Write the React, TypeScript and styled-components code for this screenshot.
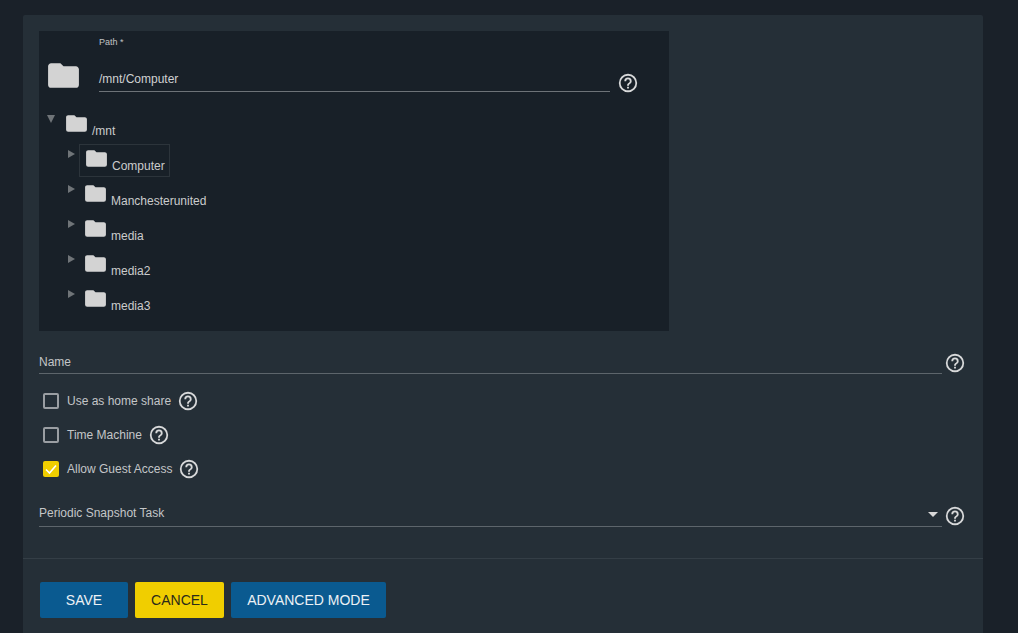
import React from "react";
import styled, { createGlobalStyle } from "styled-components";

const GlobalStyle = createGlobalStyle`
  html, body {
    margin: 0;
    height: 100%;
    overflow: hidden;
    background: #1a2129;
    font-family: "Liberation Sans", Arial, sans-serif;
  }
`;

const Page = styled.div`
  padding: 15px 35px 0 23px;
  height: 618px;
`;

const Card = styled.div`
  width: 960px;
  height: 618px;
  box-sizing: border-box;
  padding-top: 16px;
  background: #252f37;
  border-radius: 2px 2px 0 0;
`;

const Body = styled.div`
  padding: 0 17px 0 16px;
`;

const TreePanel = styled.div`
  width: 630px;
  height: 300px;
  box-sizing: border-box;
  padding: 6px 0 0 9px;
  background: #182028;
`;

const PathRow = styled.div`
  display: flex;
  align-items: flex-start;
  height: 78px;
`;

const BigFolder = styled.div`
  width: 37px;
  height: 37px;
  margin: 20px 17px 0 -3px;
`;

const PathField = styled.div`
  width: 511px;
  height: 55px;
  box-sizing: border-box;
  border-bottom: 1px solid #6d7378;
`;

const PathLabel = styled.div`
  font-size: 9px;
  line-height: 10px;
  color: #c0c2c4;
`;

const PathValue = styled.div`
  margin-top: 25px;
  font-size: 12px;
  line-height: 14px;
  color: #d0d1d2;
`;

const PathHelp = styled.div`
  margin: 35px 0 0 7px;
`;

const TreeRow = styled.div<{ $depth: number }>`
  display: flex;
  align-items: flex-start;
  height: 35px;
  padding-left: ${(p) => p.$depth * 20}px;
`;

const Toggle = styled.div<{ $open?: boolean }>`
  flex: none;
  width: 0;
  height: 0;
  ${(p) =>
    p.$open
      ? `
    margin-left: -1px;
    margin-right: 5px;
    border-left: 4px solid transparent;
    border-right: 4px solid transparent;
    border-top: 8px solid #6f7478;
  `
      : `
    margin-right: 4px;
    border-top: 4px solid transparent;
    border-bottom: 4px solid transparent;
    border-left: 7px solid #6f7478;
  `}
`;

const NodeBox = styled.div<{ $active?: boolean }>`
  display: flex;
  align-items: flex-start;
  height: 33px;
  box-sizing: border-box;
  margin-top: -6px;
  padding: 1px 4px 0 ${(p) => (p.$active ? 4 : 3)}px;
  border: 1px solid ${(p) => (p.$active ? "#2c343b" : "transparent")};
`;

const NodeIcon = styled.div`
  width: 25px;
  height: 25px;
  margin-right: 3px;
`;

const NodeName = styled.span`
  margin-top: 13px;
  font-size: 12px;
  line-height: 14px;
  color: #cbcccd;
`;

const FieldRow = styled.div<{ $top: number }>`
  display: flex;
  align-items: flex-start;
  margin-top: ${(p) => p.$top}px;
`;

const Field = styled.div<{ $pad: number }>`
  position: relative;
  flex: none;
  width: 903px;
  height: 27px;
  box-sizing: border-box;
  padding-top: ${(p) => p.$pad}px;
  border-bottom: 1px solid #5d656b;
  font-size: 12px;
  line-height: 14px;
  color: #c4c6c8;
`;

const Caret = styled.div`
  position: absolute;
  right: 4px;
  top: 12px;
  width: 0;
  height: 0;
  border-left: 5px solid transparent;
  border-right: 5px solid transparent;
  border-top: 5px solid #d8d8d8;
`;

const FieldHelp = styled.div`
  margin: 5px 0 0 2px;
`;

const CheckList = styled.div`
  display: flex;
  flex-direction: column;
  gap: 16px;
  margin-top: 18px;
  padding-left: 4px;
`;

const CheckRow = styled.div`
  display: flex;
  align-items: center;
  height: 18px;
`;

const Box = styled.div<{ $checked?: boolean }>`
  display: flex;
  align-items: center;
  justify-content: center;
  width: 16px;
  height: 16px;
  box-sizing: border-box;
  margin-right: 8px;
  border-radius: 2px;
  border: ${(p) => (p.$checked ? "none" : "2px solid #9a9ea2")};
  background: ${(p) => (p.$checked ? "#f0ce00" : "transparent")};
`;

const CheckLabel = styled.span`
  font-size: 12px;
  line-height: 14px;
  color: #c4c6c8;
`;

const CheckHelp = styled.div`
  display: flex;
  margin-left: 6px;
`;

const Divider = styled.div`
  margin-top: 31px;
  border-top: 1px solid #343e46;
`;

const Actions = styled.div`
  display: flex;
  gap: 7px;
  padding: 23px 0 0 17px;
`;

const ActionButton = styled.button<{ $accent?: boolean; $width: number }>`
  width: ${(p) => p.$width}px;
  height: 36px;
  padding: 0;
  border: none;
  border-radius: 2px;
  background: ${(p) => (p.$accent ? "#f0ce00" : "#0a5a90")};
  color: ${(p) => (p.$accent ? "#2a2a1a" : "#ecf1f5")};
  font-family: "Liberation Sans", Arial, sans-serif;
  font-size: 14px;
`;

function FolderIcon({ size }: { size: number }) {
  return (
    <svg width={size} height={size} viewBox="0 0 24 24" fill="#d3d3d3" style={{ display: "block" }}>
      <path d="M10,4H4C2.89,4 2,4.89 2,6V18A2,2 0 0,0 4,20H20A2,2 0 0,0 22,18V8C22,6.89 21.1,6 20,6H12L10,4Z" />
    </svg>
  );
}

function HelpIcon() {
  return (
    <svg width={22} height={22} viewBox="0 0 24 24" fill="#d8d9da" style={{ display: "block" }}>
      <path d="M11,18H13V16H11V18M12,2A10,10 0 0,0 2,12A10,10 0 0,0 12,22A10,10 0 0,0 22,12A10,10 0 0,0 12,2M12,20C7.59,20 4,16.41 4,12C4,7.59 7.59,4 12,4C16.41,4 20,7.59 20,12C20,16.41 16.41,20 12,20M12,6A4,4 0 0,0 8,10H10A2,2 0 0,1 12,8A2,2 0 0,1 14,10C14,12 11,11.75 11,15H13C13,12.75 16,12.5 16,10A4,4 0 0,0 12,6Z" />
    </svg>
  );
}

const children = ["Computer", "Manchesterunited", "media", "media2", "media3"];

const checks = [
  { label: "Use as home share", checked: false },
  { label: "Time Machine", checked: false },
  { label: "Allow Guest Access", checked: true },
];

export default function App() {
  return (
    <Page>
      <GlobalStyle />
      <Card>
        <Body>
          <TreePanel>
            <PathRow>
              <BigFolder>
                <FolderIcon size={37} />
              </BigFolder>
              <PathField>
                <PathLabel>Path *</PathLabel>
                <PathValue>/mnt/Computer</PathValue>
              </PathField>
              <PathHelp>
                <HelpIcon />
              </PathHelp>
            </PathRow>
            <TreeRow $depth={0}>
              <Toggle $open />
              <NodeBox>
                <NodeIcon>
                  <FolderIcon size={25} />
                </NodeIcon>
                <NodeName>/mnt</NodeName>
              </NodeBox>
            </TreeRow>
            {children.map((name, i) => (
              <TreeRow key={name} $depth={1}>
                <Toggle />
                <NodeBox $active={i === 0}>
                  <NodeIcon>
                    <FolderIcon size={25} />
                  </NodeIcon>
                  <NodeName>{name}</NodeName>
                </NodeBox>
              </TreeRow>
            ))}
          </TreePanel>
          <FieldRow $top={16}>
            <Field $pad={8}>Name</Field>
            <FieldHelp>
              <HelpIcon />
            </FieldHelp>
          </FieldRow>
          <CheckList>
            {checks.map((c) => (
              <CheckRow key={c.label}>
                <Box $checked={c.checked}>
                  {c.checked && (
                    <svg width={16} height={16} viewBox="0 0 16 16" fill="none" stroke="#fff" strokeWidth={1.6}>
                      <path d="M3 8.5 L6.5 12 L13 4.5" />
                    </svg>
                  )}
                </Box>
                <CheckLabel>{c.label}</CheckLabel>
                <CheckHelp>
                  <HelpIcon />
                </CheckHelp>
              </CheckRow>
            ))}
          </CheckList>
          <FieldRow $top={22}>
            <Field $pad={6}>
              Periodic Snapshot Task
              <Caret />
            </Field>
            <FieldHelp>
              <HelpIcon />
            </FieldHelp>
          </FieldRow>
        </Body>
        <Divider />
        <Actions>
          <ActionButton $width={88}>SAVE</ActionButton>
          <ActionButton $width={89} $accent>
            CANCEL
          </ActionButton>
          <ActionButton $width={155}>ADVANCED MODE</ActionButton>
        </Actions>
      </Card>
    </Page>
  );
}
